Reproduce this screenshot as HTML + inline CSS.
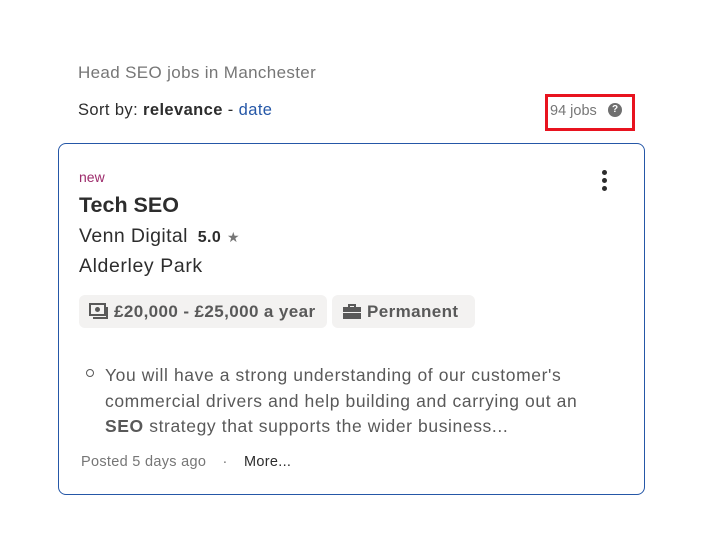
<!DOCTYPE html>
<html><head><meta charset="utf-8"><style>
*{margin:0;padding:0;box-sizing:border-box}
body{width:712px;height:545px;background:#fff;font-family:"Liberation Sans",sans-serif;position:relative;overflow:hidden;color:#2d2d2d}
.a{position:absolute;white-space:nowrap}
.card{position:absolute;left:58px;top:143px;width:587px;height:352px;border:1px solid #2557a7;border-radius:8px}
.tag{position:absolute;top:295px;height:33px;background:#f3f2f1;border-radius:6px;font-weight:bold;font-size:17px;color:#595959;line-height:33px;letter-spacing:.4px}
</style></head><body>
<div class="a" style="left:78px;top:63px;font-size:17px;color:#767676;letter-spacing:.35px">Head SEO jobs in Manchester</div>
<div class="a" style="left:78px;top:101px;font-size:16.5px;color:#2d2d2d;letter-spacing:.4px">Sort by: <b>relevance</b> - <span style="color:#2557a7">date</span></div>
<div class="a" style="left:545px;top:94px;width:90px;height:37px;border:3px solid #e8131f"></div>
<div class="a" style="left:550px;top:103px;font-size:14.5px;color:#767676">94 jobs</div>
<div class="a" style="left:608px;top:103px;width:14px;height:14px;border-radius:50%;background:#6f6f6f;color:#fff;font-size:10px;font-weight:bold;text-align:center;line-height:14px">?</div>
<div class="card"></div>
<div class="a" style="left:602px;top:170px;width:5px;height:5px;border-radius:50%;background:#2d2d2d;box-shadow:0 8px 0 #2d2d2d,0 16px 0 #2d2d2d"></div>
<div class="a" style="left:79px;top:169px;font-size:14px;color:#9d2b6b">new</div>
<div class="a" style="left:79px;top:193px;font-size:21.5px;font-weight:bold;color:#2d2d2d">Tech SEO</div>
<div class="a" style="left:79px;top:225px;font-size:19.5px;color:#2d2d2d;letter-spacing:.4px">Venn Digital <span style="font-size:16px;font-weight:bold;margin-left:4px">5.0</span> <span style="font-size:14px;color:#767676">★</span></div>
<div class="a" style="left:79px;top:255px;font-size:19.5px;color:#2d2d2d;letter-spacing:.6px">Alderley Park</div>
<div class="tag" style="left:79px;width:248px"><svg style="position:absolute;left:10px;top:8px" width="20" height="17" viewBox="0 0 20 17"><rect x="1" y="1" width="15" height="11" fill="none" stroke="#595959" stroke-width="2"/><circle cx="8.5" cy="6.5" r="2.5" fill="#595959"/><path d="M18 4v11H4" fill="none" stroke="#595959" stroke-width="2"/></svg><span style="position:absolute;left:35px">£20,000 - £25,000 a year</span></div>
<div class="tag" style="left:332px;width:143px"><svg style="position:absolute;left:11px;top:9px" width="18" height="15" viewBox="0 0 18 15"><path d="M6 3V1h6v2" fill="none" stroke="#595959" stroke-width="2"/><rect x="0" y="3" width="18" height="5" fill="#595959"/><rect x="0" y="9" width="18" height="6" fill="#595959"/></svg><span style="position:absolute;left:35px">Permanent</span></div>
<div class="a" style="left:86px;top:369px;width:8px;height:8px;border:1.5px solid #595959;border-radius:50%"></div>
<div class="a" style="left:105px;top:363px;font-size:17.5px;line-height:25.5px;color:#595959;letter-spacing:.6px">You will have a strong understanding of our customer's<br>commercial drivers and help building and carrying out an<br><b>SEO</b> strategy that supports the wider business...</div>
<div class="a" style="left:81px;top:454px;font-size:14.5px;color:#767676;letter-spacing:.3px">Posted 5 days ago <span style="margin:0 12px">·</span> <span style="color:#2d2d2d">More...</span></div>
</body></html>
